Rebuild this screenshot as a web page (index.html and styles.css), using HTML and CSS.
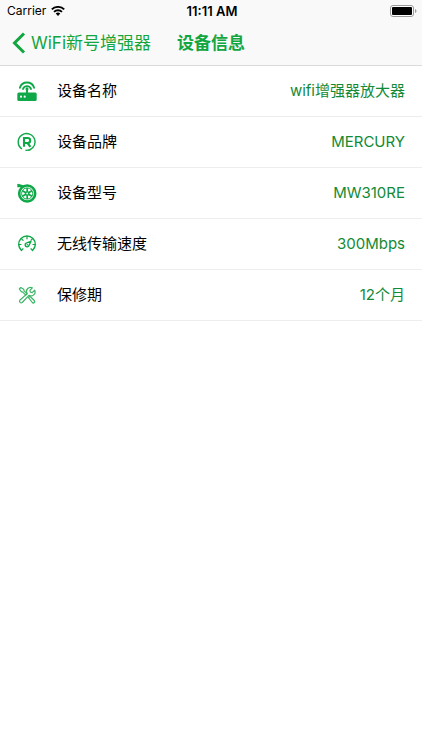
FILE: index.html
```html
<!DOCTYPE html>
<html lang="zh-CN">
<head>
<meta charset="utf-8">
<meta name="viewport" content="width=device-width, initial-scale=1">
<title>设备信息</title>
<link rel="stylesheet" href="styles.css">
</head>
<body>
<header class="top">
  <div class="status">
    <div class="carrier">
      <span>Carrier</span>
      <svg class="wifi" viewBox="0 0 14 10" aria-hidden="true">
        <path d="M.8 3.4a9 9 0 0 1 12.4 0M3 5.900a5.800 5.800 0 0 1 8 0" fill="none" stroke="#000" stroke-width="1.900"/>
        <path d="M7 10 4.700 7.600a3.300 3.300 0 0 1 4.600 0z"/>
      </svg>
    </div>
    <span class="time">11:11 AM</span>
    <svg class="battery" viewBox="0 0 27 12" aria-hidden="true">
      <rect x=".5" y=".5" width="23" height="11" rx="2.500" fill="#fff" stroke="#9a9a9a"/>
      <rect x="2" y="2" width="20" height="8" rx="1"/>
      <path d="M25 4v4q1.500-.5 1.500-2T25 4z" fill="#9a9a9a"/>
    </svg>
  </div>
  <nav class="nav">
    <a class="back" href="#">
      <svg class="chevron" viewBox="0 0 14 22" aria-hidden="true"><path d="M12 1.500 2.500 11l9.500 9.500" fill="none" stroke="currentColor" stroke-width="3"/></svg>
      <span>WiFi新号增强器</span>
    </a>
    <h1 class="title">设备信息</h1>
  </nav>
</header>
<main>
  <dl class="list">
    <div class="row">
      <dt class="label">
        <svg class="icon" viewBox="0 0 20 20" aria-hidden="true">
          <rect x=".3" y="11.500" width="19.400" height="8.500" rx="1.500" fill="currentColor"/>
          <path d="M10 12V7.500M2.900 6.800a7.400 7.400 0 0 1 14.200 0M6 8a4.200 4.200 0 0 1 8 0" fill="none" stroke="currentColor" stroke-width="1.900" stroke-linecap="round"/>
          <circle cx="10" cy="8" r="1.500" fill="currentColor"/>
          <circle cx="4" cy="15.700" r="1.100" fill="#fff"/><circle cx="7.700" cy="15.700" r="1.100" fill="#fff"/>
        </svg>
        <span>设备名称</span>
      </dt>
      <dd class="value">wifi增强器放大器</dd>
    </div>
    <div class="row">
      <dt class="label">
        <svg class="icon" viewBox="0 0 20 20" aria-hidden="true">
          <g fill="none" stroke="currentColor">
            <path d="M5 17A8.400 8.400 0 1 1 8.500 18.300M11 18.300a8.400 8.400 0 0 0 3-.9" stroke-width="1.400"/>
            <path d="M7 14.800V6h3.700a2.500 2.500 0 0 1 0 5H7M10.500 11l2.900 3.800" stroke-width="2.100"/>
          </g>
        </svg>
        <span>设备品牌</span>
      </dt>
      <dd class="value">MERCURY</dd>
    </div>
    <div class="row">
      <dt class="label">
        <svg class="icon" viewBox="0 0 20 20" aria-hidden="true">
          <g fill="none" stroke="currentColor">
            <circle cx="10.200" cy="10.500" r="8" stroke-width="2.600"/>
            <path d="M1 1v2.500h7M1 1.500 6 3" stroke-width="1.400"/>
            <circle cx="10.200" cy="10.500" r="5.600" stroke-width="1"/>
            <path d="M10.200 5v11M5.400 7.800l9.600 5.400M5.400 13.200l9.600-5.400" stroke-width="1.700"/>
          </g>
          <circle cx="10.200" cy="10.500" r="2.300" fill="currentColor"/><circle cx="10.200" cy="10.500" r=".9" fill="#fff"/>
        </svg>
        <span>设备型号</span>
      </dt>
      <dd class="value">MW310RE</dd>
    </div>
    <div class="row">
      <dt class="label">
        <svg class="icon" viewBox="0 0 20 20" aria-hidden="true">
          <g fill="none" stroke="currentColor" stroke-linecap="round" stroke-linejoin="round">
            <path d="M4.500 16.500a8.300 8.300 0 1 1 11 0" stroke-width="1.400"/>
            <path d="M10 2.500v2.300M4.600 4.800l1.500 1.500M15.400 4.800l-1.300 1.300M2 10.500h2M18 10.500h-2M4.500 16.300l1.600-1.500M15.500 16.300l-1.600-1.500" stroke-width="1.200"/>
            <path d="M14 7.300 9.600 8.900a2 2 0 1 0 2.500 2.300z" stroke-width="1.400"/>
          </g>
          <circle cx="10.300" cy="10.700" r=".8" fill="currentColor"/>
        </svg>
        <span>无线传输速度</span>
      </dt>
      <dd class="value">300Mbps</dd>
    </div>
    <div class="row">
      <dt class="label">
        <svg class="icon icon-light" viewBox="0 0 20 20" aria-hidden="true">
          <g fill="none" stroke="currentColor" stroke-width="1.200" stroke-linejoin="round">
            <path d="m2.300 4 1.500-1.500 2.900 1.800.4 1.500 3 3-1.300 1.300-3-3-1.500-.4zM11.500 12.700l1.400-1.400 4.400 4.200a1.400 1.400 0 0 1-2 2z"/>
            <path d="m2.800 15.200 7.300-6.600a4 4 0 0 1 5.200-5.700l-2.400 2.500.5 1.700 1.800.5 2.500-2.400a4 4 0 0 1-5.700 5.100l-6.800 7.200a1.700 1.700 0 0 1-2.400-2.300z"/>
          </g>
        </svg>
        <span>保修期</span>
      </dt>
      <dd class="value">12个月</dd>
    </div>
  </dl>
</main>
</body>
</html>
```
FILE: styles.css
```css
* {
  box-sizing: border-box;
}

body {
  margin: 0;
  background: #fff;
  color: #000;
  font-family: Inter, "Noto Sans CJK SC", sans-serif;
}

.top {
  background: #f9f9f9;
  border-bottom: 1px solid #dadadb;
}

.status {
  display: grid;
  grid-template-columns: 1fr auto 1fr;
  align-items: center;
  height: 21px;
  padding: 0 5px 0 7px;
  font-size: 12px;
  line-height: 20px;
}

.carrier {
  display: flex;
  align-items: center;
  gap: 5px;
}

.wifi {
  width: 14px;
  height: 10px;
}

.time {
  font-size: 13px;
  font-weight: 600;
}

.battery {
  width: 27px;
  height: 12px;
  justify-self: end;
}

.nav {
  display: grid;
  grid-template-columns: 1fr auto 1fr;
  align-items: center;
  height: 44px;
  padding: 0 12px;
  color: #12a640;
}

.back {
  display: flex;
  align-items: center;
  gap: 5px;
  color: inherit;
  font-size: 17px;
  line-height: 24px;
  text-decoration: none;
  white-space: nowrap;
}

.chevron {
  width: 14px;
  height: 22px;
}

.title {
  margin: 0;
  font-size: 17px;
  font-weight: 600;
  line-height: 24px;
}

.list {
  margin: 0;
}

.row {
  display: flex;
  align-items: center;
  justify-content: space-between;
  height: 51px;
  padding: 0 17px;
  border-bottom: 1px solid #ededed;
  font-size: 15px;
  line-height: 24px;
}

.label {
  display: flex;
  align-items: center;
  gap: 20px;
}

.icon {
  width: 20px;
  height: 20px;
  color: #0fa848;
}

.icon-light {
  color: #3db566;
}

.value {
  margin: 0;
  color: #128a36;
}
```
